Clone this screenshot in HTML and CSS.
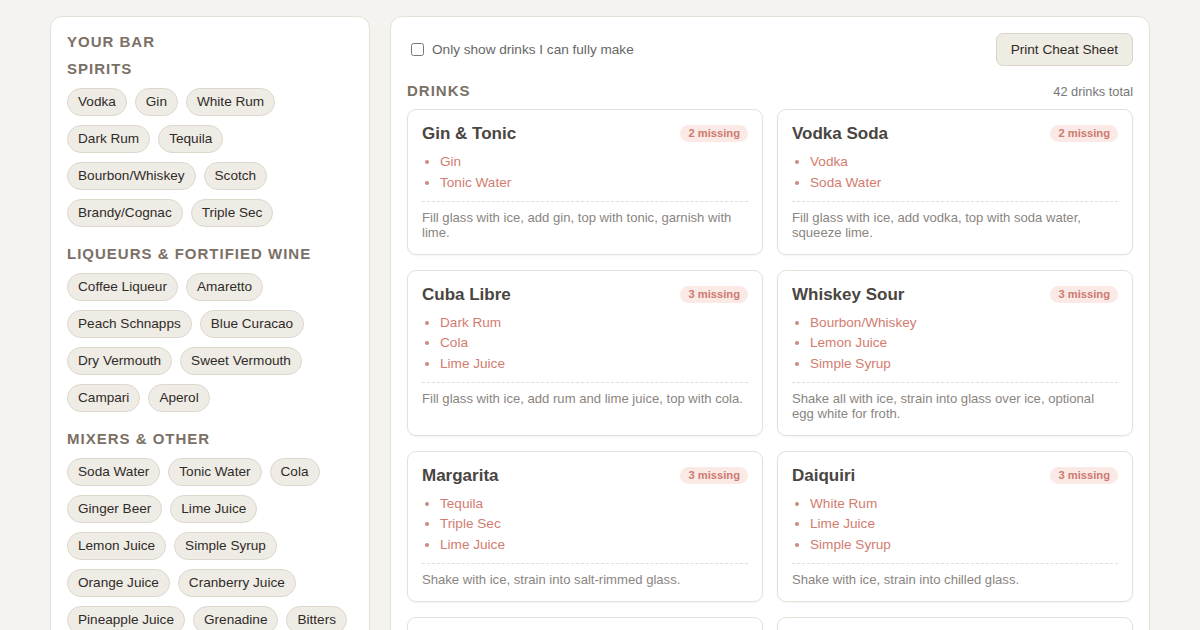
FILE: index.html
```html
<!DOCTYPE html>
<html lang="en">
<head>
<meta charset="utf-8">
<title>Your Bar</title>
<link rel="stylesheet" href="styles.css">
</head>
<body>
<div class="layout">
  <aside class="sidebar">
    <h1 class="bar-title">Your Bar</h1>
    <section class="group">
      <h2 class="group-title">Spirits</h2>
      <div class="chips">
        <span class="chip">Vodka</span><span class="chip">Gin</span><span class="chip">White Rum</span>
        <span class="chip">Dark Rum</span><span class="chip">Tequila</span>
        <span class="chip">Bourbon/Whiskey</span><span class="chip">Scotch</span>
        <span class="chip">Brandy/Cognac</span><span class="chip">Triple Sec</span>
      </div>
    </section>
    <section class="group">
      <h2 class="group-title">Liqueurs &amp; Fortified Wine</h2>
      <div class="chips">
        <span class="chip">Coffee Liqueur</span><span class="chip">Amaretto</span>
        <span class="chip">Peach Schnapps</span><span class="chip">Blue Curacao</span>
        <span class="chip">Dry Vermouth</span><span class="chip">Sweet Vermouth</span>
        <span class="chip">Campari</span><span class="chip">Aperol</span>
      </div>
    </section>
    <section class="group">
      <h2 class="group-title">Mixers &amp; Other</h2>
      <div class="chips">
        <span class="chip">Soda Water</span><span class="chip">Tonic Water</span><span class="chip">Cola</span>
        <span class="chip">Ginger Beer</span><span class="chip">Lime Juice</span>
        <span class="chip">Lemon Juice</span><span class="chip">Simple Syrup</span>
        <span class="chip">Orange Juice</span><span class="chip">Cranberry Juice</span>
        <span class="chip">Pineapple Juice</span><span class="chip">Grenadine</span><span class="chip">Bitters</span>
        <span class="chip">Mint</span><span class="chip">Sugar</span>
      </div>
    </section>
  </aside>

  <main class="main">
    <div class="toolbar">
      <label class="filter"><input type="checkbox" class="filter-box"> Only show drinks I can fully make</label>
      <button class="print-btn" type="button">Print Cheat Sheet</button>
    </div>
    <div class="drinks-head">
      <h2 class="drinks-title">Drinks</h2>
      <span class="drinks-count">42 drinks total</span>
    </div>
    <div class="grid">
      <article class="card">
        <div class="card-head"><h3 class="card-title">Gin &amp; Tonic</h3><span class="badge">2 missing</span></div>
        <ul class="ingredients"><li>Gin</li><li>Tonic Water</li></ul>
        <p class="method">Fill glass with ice, add gin, top with tonic, garnish with lime.</p>
      </article>
      <article class="card">
        <div class="card-head"><h3 class="card-title">Vodka Soda</h3><span class="badge">2 missing</span></div>
        <ul class="ingredients"><li>Vodka</li><li>Soda Water</li></ul>
        <p class="method">Fill glass with ice, add vodka, top with soda water, squeeze lime.</p>
      </article>
      <article class="card">
        <div class="card-head"><h3 class="card-title">Cuba Libre</h3><span class="badge">3 missing</span></div>
        <ul class="ingredients"><li>Dark Rum</li><li>Cola</li><li>Lime Juice</li></ul>
        <p class="method">Fill glass with ice, add rum and lime juice, top with cola.</p>
      </article>
      <article class="card">
        <div class="card-head"><h3 class="card-title">Whiskey Sour</h3><span class="badge">3 missing</span></div>
        <ul class="ingredients"><li>Bourbon/Whiskey</li><li>Lemon Juice</li><li>Simple Syrup</li></ul>
        <p class="method">Shake all with ice, strain into glass over ice, optional egg white for froth.</p>
      </article>
      <article class="card">
        <div class="card-head"><h3 class="card-title">Margarita</h3><span class="badge">3 missing</span></div>
        <ul class="ingredients"><li>Tequila</li><li>Triple Sec</li><li>Lime Juice</li></ul>
        <p class="method">Shake with ice, strain into salt-rimmed glass.</p>
      </article>
      <article class="card">
        <div class="card-head"><h3 class="card-title">Daiquiri</h3><span class="badge">3 missing</span></div>
        <ul class="ingredients"><li>White Rum</li><li>Lime Juice</li><li>Simple Syrup</li></ul>
        <p class="method">Shake with ice, strain into chilled glass.</p>
      </article>
      <article class="card">
        <div class="card-head"><h3 class="card-title">Moscow Mule</h3><span class="badge">3 missing</span></div>
        <ul class="ingredients"><li>Vodka</li><li>Ginger Beer</li><li>Lime Juice</li></ul>
        <p class="method">Build over ice in a copper mug, garnish with lime.</p>
      </article>
      <article class="card">
        <div class="card-head"><h3 class="card-title">Negroni</h3><span class="badge">3 missing</span></div>
        <ul class="ingredients"><li>Gin</li><li>Campari</li><li>Sweet Vermouth</li></ul>
        <p class="method">Stir with ice, strain over a large cube, orange peel.</p>
      </article>
    </div>
  </main>
</div>
</body>
</html>
```

FILE: styles.css
```css
* { box-sizing: border-box; }

html, body {
  margin: 0;
  padding: 0;
  background: #f5f3ef;
  font-family: "Liberation Sans", Arial, sans-serif;
  color: #333;
}

.layout {
  display: flex;
  align-items: flex-start;
  gap: 20px;
  width: 1100px;
  margin: 0 auto;
  padding-top: 16px;
}

.sidebar {
  flex: 0 0 320px;
  background: #fff;
  border: 1px solid #e4dfd7;
  border-radius: 12px;
  padding: 17px 16px 20px;
}

.bar-title,
.group-title,
.drinks-title {
  font-size: 15px;
  line-height: 16px;
  font-weight: bold;
  text-transform: uppercase;
  letter-spacing: 1px;
  color: #7b7066;
}

.bar-title { margin: 0 0 11px; }

.group { margin-bottom: 19px; }

.group-title { margin: 0 0 11px; }

.chips {
  display: flex;
  flex-wrap: wrap;
  gap: 9px 8px;
}

.chip {
  display: inline-block;
  padding: 5px 10px;
  font-size: 13.6px;
  line-height: 16px;
  color: #2f2b28;
  background: #efece6;
  border: 1px solid #ddd8ce;
  border-radius: 999px;
  white-space: nowrap;
}

.main {
  flex: 1 1 auto;
  background: #fff;
  border: 1px solid #e4dfd7;
  border-radius: 12px;
  padding: 16px 16px 20px;
}

.toolbar {
  display: flex;
  align-items: center;
  justify-content: space-between;
}

.filter {
  display: flex;
  align-items: center;
  gap: 8px;
  padding-left: 4px;
  font-size: 13.6px;
  color: #666;
}

.filter-box {
  margin: 0;
  width: 13px;
  height: 13px;
}

.print-btn {
  font-family: "Liberation Sans", Arial, sans-serif;
  font-size: 13.6px;
  line-height: 15px;
  color: #2f2b28;
  background: #efece4;
  border: 1px solid #d9d3c9;
  border-radius: 7px;
  padding: 8px 14px;
  cursor: pointer;
}

.drinks-head {
  display: flex;
  align-items: baseline;
  justify-content: space-between;
  margin: 17px 0 10px;
}

.drinks-title { margin: 0; }

.drinks-count {
  font-size: 12.8px;
  color: #777;
}

.grid {
  display: grid;
  grid-template-columns: 1fr 1fr;
  gap: 15px 14px;
}

.card {
  border: 1px solid #e6e0d8;
  border-radius: 9px;
  padding: 13px 14px 13.5px;
  box-shadow: 0 1px 2px rgba(0, 0, 0, 0.05);
}

.card-head {
  display: flex;
  align-items: center;
  justify-content: space-between;
  margin-bottom: 8px;
}

.card-title {
  margin: 0;
  font-size: 17px;
  line-height: 21px;
  font-weight: bold;
  color: #4a4541;
}

.badge {
  font-size: 11.2px;
  line-height: 13px;
  font-weight: bold;
  color: #cc7b70;
  background: #fbe9e6;
  border-radius: 999px;
  padding: 2px 8px;
}

.ingredients {
  margin: 0 0 8px;
  padding: 0 0 8px 18px;
  border-bottom: 1px dashed #e2ddd6;
  color: #d27c70;
  font-size: 13.6px;
  line-height: 20.5px;
}

.ingredients li::marker { color: #c98a80; }

.method {
  margin: 0;
  font-size: 13.1px;
  line-height: 15px;
  color: #8a857f;
}
```
